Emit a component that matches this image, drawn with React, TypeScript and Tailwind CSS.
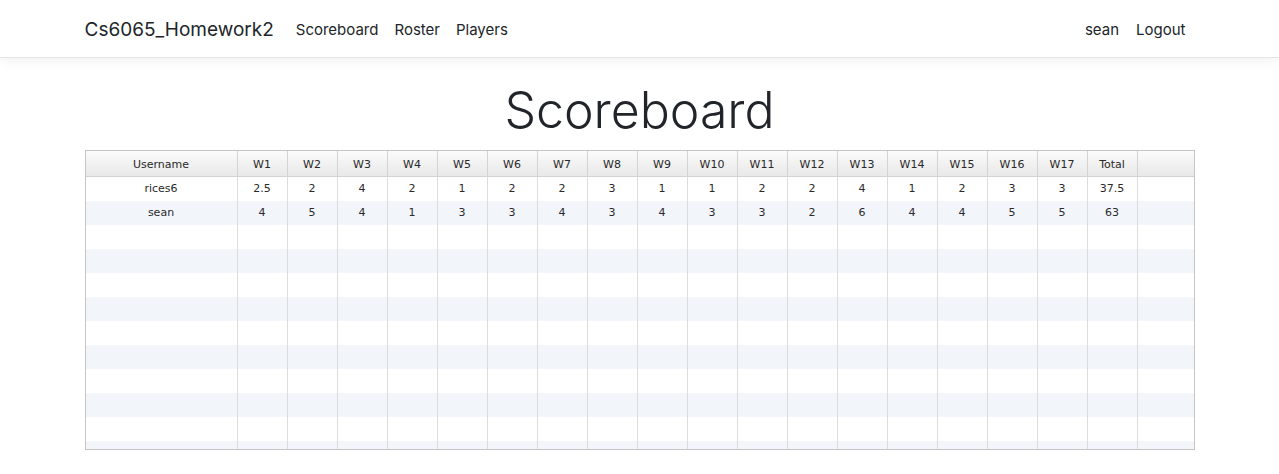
import React from "react";

const weeks = Array.from({ length: 17 }, (_, i) => `W${i + 1}`);
const data: { name: string; scores: (string | number)[]; total: string | number }[] = [
  { name: "rices6", scores: [2.5, 2, 4, 2, 1, 2, 2, 3, 1, 1, 2, 2, 4, 1, 2, 3, 3], total: 37.5 },
  { name: "sean", scores: [4, 5, 4, 1, 3, 3, 4, 3, 4, 3, 3, 2, 6, 4, 4, 5, 5], total: 63 },
];

export default function App() {
  const rows = Array.from({ length: 12 }, (_, i) => data[i] ?? null);
  return (
    <div className="min-h-screen bg-white" style={{ fontFamily: "Inter, 'Noto Sans', sans-serif" }}>
      <nav className="h-[58px] border-b border-[#e5e5e5] bg-white shadow-[0_4px_12px_rgba(0,0,0,0.05)]">
        <div className="mx-auto flex h-full w-[1110px] items-center pt-[3px]">
          <span className="mr-[22px] text-[19px] text-[#212529]">Cs6065_Homework2</span>
          <div className="flex text-[15px] text-[#212529]">
            <span className="px-[8px] -ml-[8px]">Scoreboard</span>
            <span className="px-[8px]">Roster</span>
            <span className="px-[8px]">Players</span>
          </div>
          <div className="ml-auto flex text-[15px] text-[#212529]">
            <span className="pl-[8px] pr-[9px]">sean</span>
            <span className="pl-[8px] pr-[9px]">Logout</span>
          </div>
        </div>
      </nav>
      <div className="mx-auto w-[1110px]">
        <h1 className="pt-[22px] pb-[10px] text-center text-[50px] font-light leading-[60px] text-[#212529]">Scoreboard</h1>
        <div
          className="border border-[#c5c5c5] text-[11px] text-[#2a2a2a]"
          style={{ fontFamily: "'DejaVu Sans', Verdana, sans-serif" }}
        >
          <div className="flex h-[26px] border-b border-[#d3d3d3] bg-gradient-to-b from-[#fbfbfb] to-[#e8e8e8]">
            <div className="flex w-[152px] shrink-0 items-center justify-center border-r border-[#d3d3d3] pt-[3px]">Username</div>
            {weeks.map((w) => (
              <div key={w} className="flex w-[50px] shrink-0 items-center justify-center border-r border-[#d3d3d3] pt-[3px]">{w}</div>
            ))}
            <div className="flex w-[50px] shrink-0 items-center justify-center border-r border-[#d3d3d3] pt-[3px]">Total</div>
            <div className="flex-1" />
          </div>
          <div className="h-[272px] overflow-hidden">
            {rows.map((r, i) => (
              <div key={i} className={`flex h-[24px] ${i % 2 === 1 ? "bg-[#f2f5fa]" : "bg-white"}`}>
                <div className="flex w-[152px] shrink-0 items-center justify-center border-r border-[#dcdcdc]">{r?.name ?? ""}</div>
                {weeks.map((w, j) => (
                  <div key={w} className="flex w-[50px] shrink-0 items-center justify-center border-r border-[#dcdcdc]">{r ? r.scores[j] : ""}</div>
                ))}
                <div className="flex w-[50px] shrink-0 items-center justify-center border-r border-[#dcdcdc]">{r?.total ?? ""}</div>
                <div className="flex-1" />
              </div>
            ))}
          </div>
        </div>
      </div>
    </div>
  );
}
